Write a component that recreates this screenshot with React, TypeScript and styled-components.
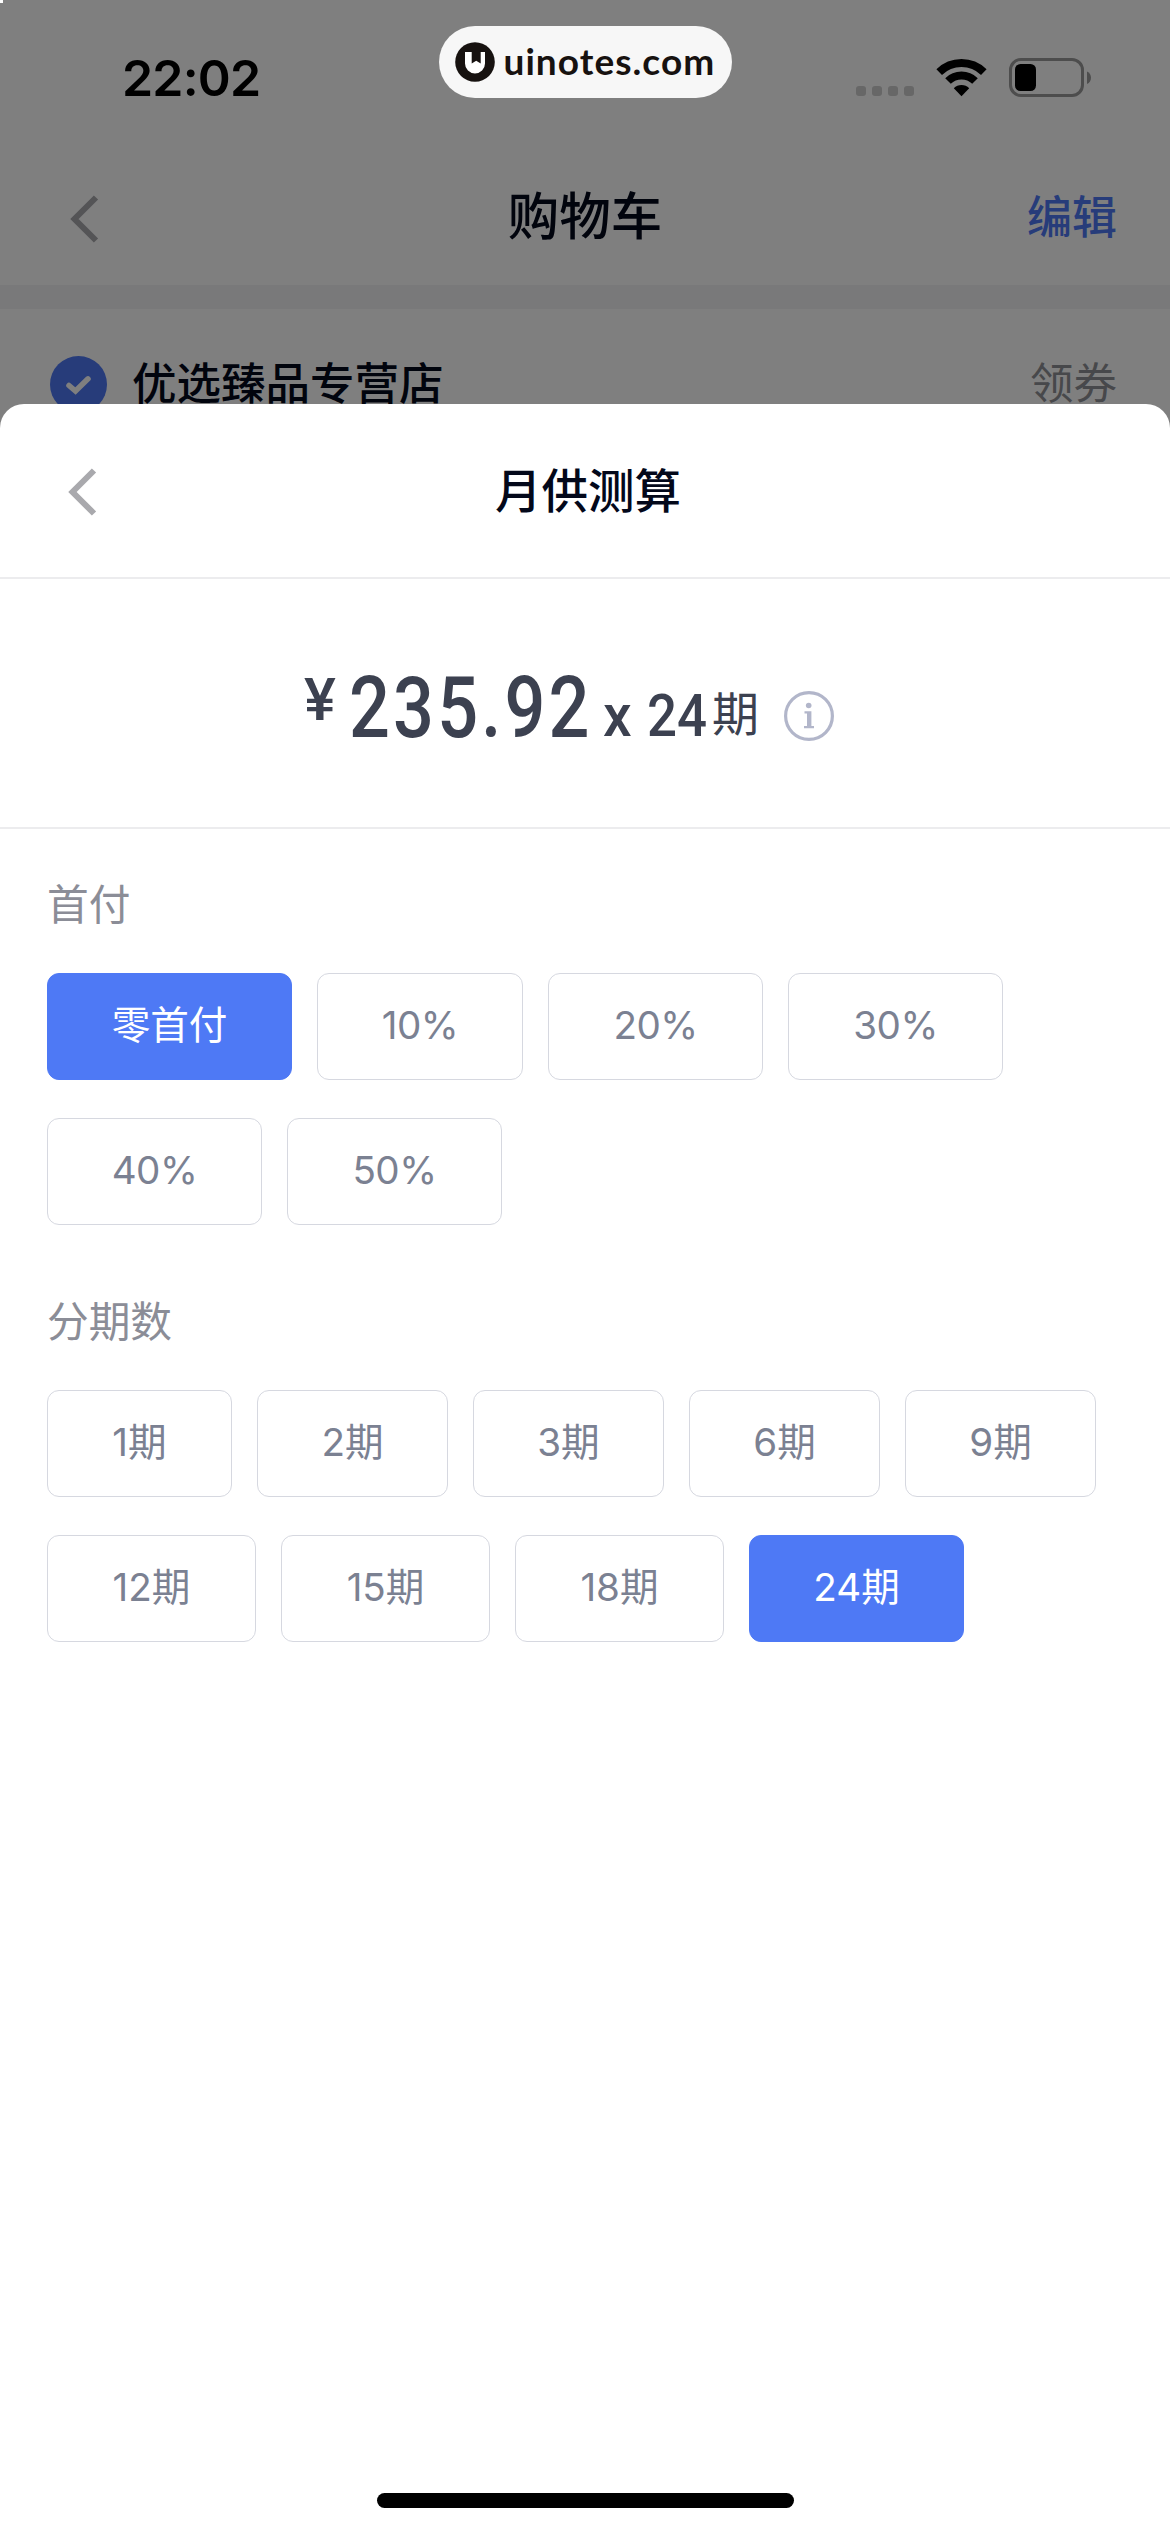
import React, { useState } from 'react';
import styled, { createGlobalStyle } from 'styled-components';

const GlobalStyle = createGlobalStyle`
  *, *::before, *::after { box-sizing: border-box; }
  body { margin: 0; background: #fff; }
  button { font: inherit; margin: 0; padding: 0; border: 0; background: none; }
  svg { display: block; flex: none; }
`;

const cjk = `'Noto Sans CJK SC', sans-serif`;
const blue = '#4e79f5';

const Screen = styled.div`
  position: relative;
  width: 1170px;
  height: 2532px;
  overflow: hidden;
  background: #fff;
  font-family: Inter, ${cjk};
`;

const StatusBar = styled.header`
  display: flex;
  justify-content: space-between;
  height: 141px;
  padding: 0 78px 0 122px;
`;

const Clock = styled.time`
  padding-top: 47px;
  font: 600 50px/62px Inter, sans-serif;
  letter-spacing: -0.8px;
  color: #000;
`;

const StatusIcons = styled.div`
  display: flex;
  align-items: flex-start;
  padding-top: 58px;
`;

const SignalDots = styled.div`
  display: flex;
  gap: 6px;
  margin: 28px 22px 0 0;
`;

const SignalDot = styled.span`
  width: 10px;
  height: 10px;
  border-radius: 3px;
  background: #cfcfcf;
`;

const CartBar = styled.div`
  display: grid;
  grid-template-columns: 1fr auto 1fr;
  align-items: center;
  height: 144px;
  padding: 12px 53px 0 70px;
`;

const CartTitle = styled.h1`
  margin: 0 17px 0 0;
  font: 500 51.5px/76px ${cjk};
  color: #03081a;
  padding-bottom: 12px;
`;

const EditButton = styled.button`
  justify-self: end;
  padding-bottom: 8px;
  font: 500 45px/64px ${cjk};
  color: ${blue};
`;

const Band = styled.div`
  height: 24px;
  background: #f3f3f4;
`;

const ShopRow = styled.div`
  display: flex;
  align-items: center;
  height: 151px;
  padding: 0 53px 0 50px;
`;

const ShopName = styled.h2`
  flex: 1;
  margin: 0 0 0 25px;
  padding-bottom: 8px;
  font: 500 44.5px/64px ${cjk};
  color: #03081a;
`;

const Coupon = styled.span`
  padding-bottom: 8px;
  font: 400 43.5px/64px ${cjk};
  color: #8f9096;
`;

const Mask = styled.div`
  position: absolute;
  inset: 0;
  background: rgba(0, 0, 0, 0.5);
`;

const CornerMark = styled.span`
  position: absolute;
  left: 0;
  top: 0;
  width: 3px;
  height: 3px;
  background: #fff;
`;

const SiteBadge = styled.div`
  position: absolute;
  left: 439px;
  top: 26px;
  display: flex;
  align-items: center;
  gap: 8.5px;
  width: 293px;
  height: 72px;
  padding: 0 16px;
  border-radius: 36px;
  background: #f7f7f7;
`;

const SiteName = styled.span`
  font: 700 37px/44px Lato, sans-serif;
  letter-spacing: 1.05px;
  color: #171210;
  padding-bottom: 2px;
`;

const Sheet = styled.section`
  position: absolute;
  left: 0;
  right: 0;
  top: 404px;
  bottom: 0;
  display: flex;
  flex-direction: column;
  border-radius: 24px 24px 0 0;
  background: #fff;
`;

const SheetHeader = styled.div`
  display: grid;
  grid-template-columns: 1fr auto 1fr;
  align-items: center;
  height: 175px;
  padding: 2px 62px 0 68px;
  border-bottom: 2px solid #ececee;
`;

const SheetTitle = styled.h2`
  margin: 0;
  font: 500 46.5px/68px ${cjk};
  color: #03081a;
  padding-bottom: 7px;
`;

const PriceRow = styled.div`
  display: flex;
  align-items: flex-start;
  height: 250px;
  padding: 0 0 0 304px;
  border-bottom: 2px solid #ececee;
  color: #3c4150;
`;

const Numeral = styled.span<{ $size: number; $width: number; $top: number; $squeeze?: number; $gap?: number }>`
  display: block;
  flex: none;
  width: ${(p) => p.$width}px;
  margin-top: ${(p) => p.$top}px;
  font: 500 ${(p) => p.$size}px/1 Roboto, sans-serif;
  letter-spacing: ${(p) => p.$gap ?? 0}px;
  white-space: nowrap;
  transform: scaleX(${(p) => p.$squeeze ?? 0.86});
  transform-origin: left center;
`;

const Unit = styled.span`
  width: 72px;
  margin-top: 98px;
  font: 400 47px/68px ${cjk};
`;

const InfoButton = styled.button`
  margin-top: 112px;
`;

const OptionGroup = styled.section`
  display: flex;
  flex-direction: column;
  padding: 0 47px;
`;

const GroupLabel = styled.h3<{ $top: number }>`
  margin: ${(p) => p.$top}px 0 41px;
  font: 400 41.7px/60px ${cjk};
  color: #8b8d97;
`;

const Chips = styled.div`
  display: flex;
  flex-wrap: wrap;
  gap: 38px 25px;
`;

const Chip = styled.button<{ $width: number; $active: boolean; $tracking: number }>`
  width: ${(p) => p.$width}px;
  height: 107px;
  padding-bottom: 3px;
  border: 1px solid ${(p) => (p.$active ? blue : '#d6d8e0')};
  border-radius: 12px;
  background: ${(p) => (p.$active ? blue : '#fff')};
  color: ${(p) => (p.$active ? '#fff' : '#7b8192')};
  font: 400 38.6px/56px Inter, ${cjk};
  letter-spacing: ${(p) => p.$tracking}px;
  white-space: nowrap;
`;

const HomeIndicator = styled.div`
  width: 417px;
  height: 15px;
  margin: auto auto 24px;
  border-radius: 8px;
  background: #000;
`;

const BackIcon = () => (
  <svg width="29" height="48" viewBox="0 0 29 48" fill="none" stroke="#a9a9ad" strokeWidth="6">
    <path d="M26 2.5 4.5 24 26 45.5" />
  </svg>
);

const WifiIcon = () => (
  <svg width="51" height="39" viewBox="0 0 51 39" fill="none" stroke="#000" strokeWidth="8">
    <path d="M3.2 14.1a32 32 0 0 1 44.6 0" />
    <path d="M12 23a19.3 19.3 0 0 1 27 0" />
    <path d="M25.5 38.3 17.8 30.2a11 11 0 0 1 15.4 0z" fill="#000" stroke="none" />
  </svg>
);

const BatterySvg = styled.svg`
  margin-left: 22px;
`;

const BatteryIcon = () => (
  <BatterySvg width="83" height="39" viewBox="0 0 83 39">
    <rect x="1.5" y="1.5" width="72" height="36" rx="10.5" fill="none" stroke="#9a9a9a" strokeWidth="3" />
    <rect x="6" y="6" width="21" height="27" rx="5.5" fill="#000" />
    <path d="M78 13.5c5.3 2 5.3 10.5 0 12.5z" fill="#9a9a9a" />
  </BatterySvg>
);

const CheckIcon = () => (
  <svg width="57" height="57" viewBox="0 0 57 57">
    <circle cx="28.5" cy="28.5" r="28.5" fill={blue} />
    <path d="M19 29.5 25.5 35 38 22.8" fill="none" stroke="#fff" strokeWidth="5.5" strokeLinecap="round" />
  </svg>
);

const SiteLogo = () => (
  <svg width="40" height="40" viewBox="0 0 40 40">
    <circle cx="20" cy="20" r="19.8" fill="#171210" />
    <path d="M10 10h6.7v11.5l4.5-2.7 4.5 2.7V10H30v11.500a10 10 0 0 1-20 0z" fill="#fff" />
  </svg>
);

const InfoIcon = () => (
  <svg width="50" height="50" viewBox="0 0 50 50" fill="#b2b6ca">
    <circle cx="25" cy="25" r="23.4" fill="none" stroke="#b2b6ca" strokeWidth="3.2" />
    <circle cx="24.7" cy="14.5" r="2.8" />
    <path d="M20.5 20.3h6.9v14.8h2.6v2.200H20v-2.200h3V22.500h-2.500z" />
  </svg>
);

type Option = { label: string; width: number };

const downPayments: Option[] = [
  { label: '零首付', width: 245 },
  { label: '10%', width: 206 },
  { label: '20%', width: 215 },
  { label: '30%', width: 215 },
  { label: '40%', width: 215 },
  { label: '50%', width: 215 },
];

const periods: Option[] = [
  { label: '1期', width: 185 },
  { label: '2期', width: 191 },
  { label: '3期', width: 191 },
  { label: '6期', width: 191 },
  { label: '9期', width: 191 },
  { label: '12期', width: 209 },
  { label: '15期', width: 209 },
  { label: '18期', width: 209 },
  { label: '24期', width: 215 },
];

function OptionPicker({ title, top, options, initial }: { title: string; top: number; options: Option[]; initial: string }) {
  const [selected, setSelected] = useState(initial);
  return (
    <OptionGroup>
      <GroupLabel $top={top}>{title}</GroupLabel>
      <Chips>
        {options.map((o) => (
          <Chip
            key={o.label}
            $width={o.width}
            $active={o.label === selected}
            $tracking={o.label.endsWith('%') ? -0.5 : 0}
            onClick={() => setSelected(o.label)}
          >
            {o.label}
          </Chip>
        ))}
      </Chips>
    </OptionGroup>
  );
}

export default function App() {
  return (
    <Screen>
      <GlobalStyle />
      <StatusBar>
        <Clock>22:02</Clock>
        <StatusIcons>
          <SignalDots>
            <SignalDot />
            <SignalDot />
            <SignalDot />
            <SignalDot />
          </SignalDots>
          <WifiIcon />
          <BatteryIcon />
        </StatusIcons>
      </StatusBar>
      <CartBar>
        <BackIcon />
        <CartTitle>购物车</CartTitle>
        <EditButton>编辑</EditButton>
      </CartBar>
      <Band />
      <ShopRow>
        <CheckIcon />
        <ShopName>优选臻品专营店</ShopName>
        <Coupon>领券</Coupon>
      </ShopRow>
      <Mask />
      <CornerMark />
      <SiteBadge>
        <SiteLogo />
        <SiteName>uinotes.com</SiteName>
      </SiteBadge>
      <Sheet>
        <SheetHeader>
          <BackIcon />
          <SheetTitle>月供测算</SheetTitle>
        </SheetHeader>
        <PriceRow>
          <Numeral $size={60} $width={45} $top={91} $squeeze={1}>¥</Numeral>
          <Numeral $size={86} $width={254} $top={86} $gap={3.8} $squeeze={0.837}>235.92</Numeral>
          <Numeral $size={60} $width={44} $top={107} $squeeze={0.95}>x</Numeral>
          <Numeral $size={60} $width={65} $top={107} $squeeze={0.88}>24</Numeral>
          <Unit>期</Unit>
          <InfoButton aria-label="info">
            <InfoIcon />
          </InfoButton>
        </PriceRow>
        <OptionPicker title="首付" top={43} options={downPayments} initial="零首付" />
        <OptionPicker title="分期数" top={64} options={periods} initial="24期" />
        <HomeIndicator />
      </Sheet>
    </Screen>
  );
}
